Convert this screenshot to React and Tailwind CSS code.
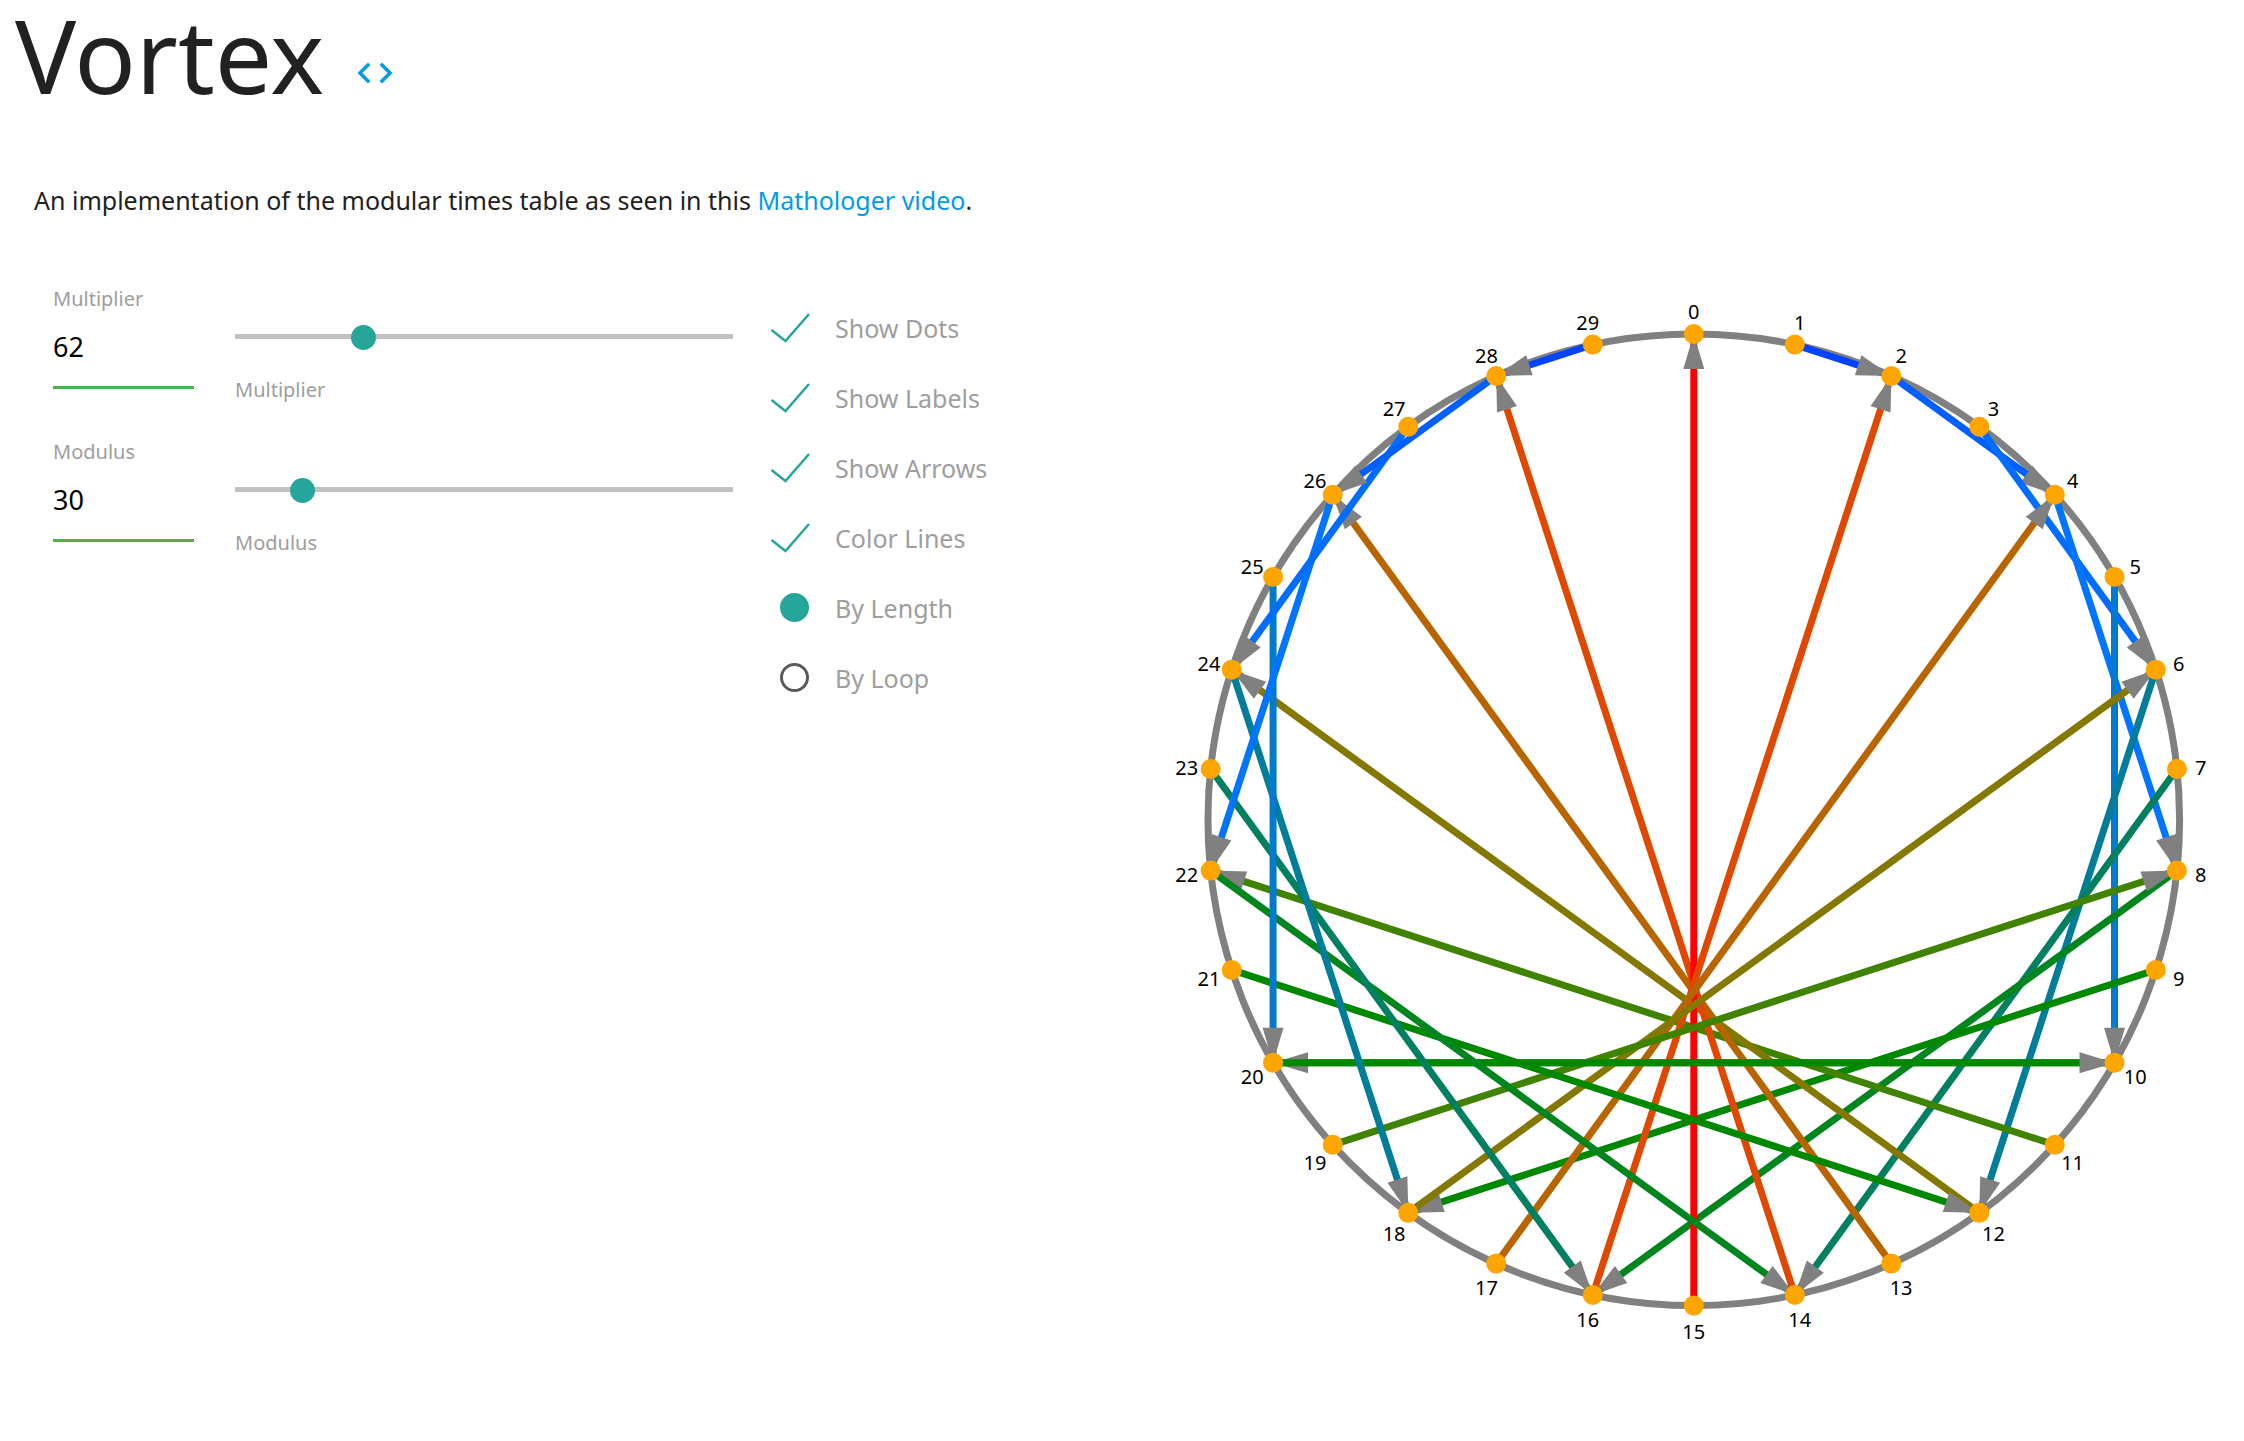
import React, { useState } from "react";

const CENTER = 550;
const RADIUS = 486;
const LABEL_RADIUS = 510;

const LENGTH_COLORS = [
  "#0000ff", "#0044ff", "#0060ff", "#006dff", "#0075ff", "#007acc", "#007d99", "#008060",
  "#00851f", "#008800", "#008800", "#408300", "#857800", "#b86500", "#e04800", "#ff0000",
];

function point(index, modulus, radius) {
  const angle = (2 * Math.PI * index) / modulus;
  return [CENTER + radius * Math.sin(angle), CENTER - radius * Math.cos(angle)];
}

function chordColor(from, to, modulus) {
  const gap = Math.abs(from - to);
  const steps = Math.min(gap, modulus - gap);
  return LENGTH_COLORS[Math.round((steps * 30) / modulus)];
}

function Chord({ from, to, modulus, arrows, colored }) {
  const [x1, y1] = point(from, modulus, RADIUS);
  const [x2, y2] = point(to, modulus, RADIUS);
  const heading = (Math.atan2(y2 - y1, x2 - x1) * 180) / Math.PI;
  return (
    <g>
      <line x1={x1} y1={y1} x2={x2} y2={y2} strokeWidth="7" stroke={colored ? chordColor(from, to, modulus) : "#808080"} />
      {arrows && <path d="M-35 -10.5L0 0L-35 10.5Z" fill="#808080" transform={`translate(${x2} ${y2}) rotate(${heading})`} />}
    </g>
  );
}

function Wheel({ multiplier, modulus, options }) {
  const indices = Array.from({ length: modulus }, (_, i) => i);
  return (
    <svg viewBox="0 0 1100 1100" className="block w-full" role="img" aria-label="Modular times table">
      <circle cx={CENTER} cy={CENTER} r={RADIUS} fill="none" stroke="#808080" strokeWidth="7" />
      {indices.map((i) => {
        const target = (i * multiplier) % modulus;
        if (target === i) return null;
        return <Chord key={i} from={i} to={target} modulus={modulus} arrows={options.arrows} colored={options.colors} />;
      })}
      {options.dots && indices.map((i) => {
        const [x, y] = point(i, modulus, RADIUS);
        return <circle key={i} cx={x} cy={y} r="10" fill="#ffa500" />;
      })}
      {options.labels && indices.map((i) => {
        const [x, y] = point(i, modulus, LABEL_RADIUS);
        return <text key={i} x={x} y={y + 9} textAnchor="middle" fontSize="20" fill="#000">{i}</text>;
      })}
    </svg>
  );
}

function Control({ id, label, value, min, max, onChange }) {
  return (
    <div className="flex h-[153px]">
      <div className="w-[141px]">
        <label htmlFor={id} className="block text-[20px] leading-[30px] text-[#9e9e9e]">{label}</label>
        <input
          id={id}
          type="text"
          value={value}
          onChange={(e) => onChange(Number(e.target.value) || min)}
          className="block h-[75px] w-full border-b-[3px] border-[#4caf50] bg-transparent pb-2 text-[27px] text-black outline-none"
        />
      </div>
      <div className="ml-[41px] flex-1 pt-[40px]">
        <input
          id={`${id}-range`}
          type="range"
          min={min}
          max={max}
          value={value}
          onChange={(e) => onChange(Number(e.target.value))}
          className="block h-[25px] w-full cursor-pointer appearance-none bg-transparent outline-none [&::-webkit-slider-runnable-track]:h-[5px] [&::-webkit-slider-runnable-track]:bg-[#c2c0c2] [&::-webkit-slider-thumb]:-mt-[9px] [&::-webkit-slider-thumb]:size-[25px] [&::-webkit-slider-thumb]:appearance-none [&::-webkit-slider-thumb]:rounded-full [&::-webkit-slider-thumb]:bg-[#26a69a]"
        />
        <label htmlFor={`${id}-range`} className="mt-[26px] block text-[20px] leading-[30px] text-[#9e9e9e]">{label}</label>
      </div>
    </div>
  );
}

function Check({ label, checked, onChange }) {
  return (
    <label className="flex h-[70px] cursor-pointer items-center text-[25px] text-[#9e9e9e]">
      <input type="checkbox" checked={checked} onChange={(e) => onChange(e.target.checked)} className="peer sr-only" />
      <svg viewBox="0 0 40 30" className="mr-[25px] mb-[2px] h-[30px] w-[40px] shrink-0 fill-none stroke-[#5a5a5a] peer-checked:stroke-[#26a69a]" aria-hidden="true">
        {checked ? <path d="M1.500 17L15.500 28L39 1" strokeWidth="2.500" /> : <rect x="8" y="2" width="26" height="26" strokeWidth="3" />}
      </svg>
      {label}
    </label>
  );
}

function Radio({ label, checked, onChange }) {
  return (
    <label className="flex h-[70px] cursor-pointer items-center text-[25px] text-[#9e9e9e]">
      <input
        type="radio"
        name="coloring"
        checked={checked}
        onChange={onChange}
        className="mr-[26px] ml-[10px] mb-[4px] size-[29px] shrink-0 appearance-none rounded-full border-[3px] border-[#5a5a5a] checked:border-[#26a69a] checked:bg-[#26a69a]"
      />
      {label}
    </label>
  );
}

export default function App() {
  const [multiplier, setMultiplier] = useState(62);
  const [modulus, setModulus] = useState(30);
  const [options, setOptions] = useState({ dots: true, labels: true, arrows: true, colors: true });
  const [coloring, setColoring] = useState("length");
  const toggle = (key) => (value) => setOptions({ ...options, [key]: value });

  return (
    <div className="bg-white font-['Noto_Sans','Open_Sans',sans-serif] text-[#212121]">
      <header className="flex items-start pl-[15px]">
        <h1 className="text-[102px] leading-[110px]">Vortex</h1>
        <a href="#source" aria-label="View source" className="mt-[52px] ml-[30px] text-[#039be5]">
          <svg viewBox="0 0 24 24" className="size-[42px] fill-current" aria-hidden="true">
            <path d="M9.400 16.600L4.800 12l4.600-4.600L8 6l-6 6 6 6 1.400-1.400zm5.200 0l4.600-4.600-4.600-4.600L16 6l6 6-6 6-1.400-1.400z" />
          </svg>
        </a>
      </header>
      <main className="flex items-start">
        <section className="w-[51%] pt-[72px] pl-[34px]">
          <p className="text-[25px] leading-[36px]">
            An implementation of the modular times table as seen in this{" "}
            <a href="#video" className="text-[#039be5]">Mathologer video</a>.
          </p>
          <div className="mt-[66px] flex pl-[19px]">
            <div className="w-[680px]">
              <Control id="multiplier" label="Multiplier" value={multiplier} min={2} max={247} onChange={setMultiplier} />
              <Control id="modulus" label="Modulus" value={modulus} min={2} max={243} onChange={setModulus} />
            </div>
            <div className="ml-[37px] pt-[10px]">
              <Check label="Show Dots" checked={options.dots} onChange={toggle("dots")} />
              <Check label="Show Labels" checked={options.labels} onChange={toggle("labels")} />
              <Check label="Show Arrows" checked={options.arrows} onChange={toggle("arrows")} />
              <Check label="Color Lines" checked={options.colors} onChange={toggle("colors")} />
              <Radio label="By Length" checked={coloring === "length"} onChange={() => setColoring("length")} />
              <Radio label="By Loop" checked={coloring === "loop"} onChange={() => setColoring("loop")} />
            </div>
          </div>
        </section>
        <section className="flex-1 pt-[160px]">
          <Wheel multiplier={multiplier} modulus={modulus} options={options} />
        </section>
      </main>
    </div>
  );
}
